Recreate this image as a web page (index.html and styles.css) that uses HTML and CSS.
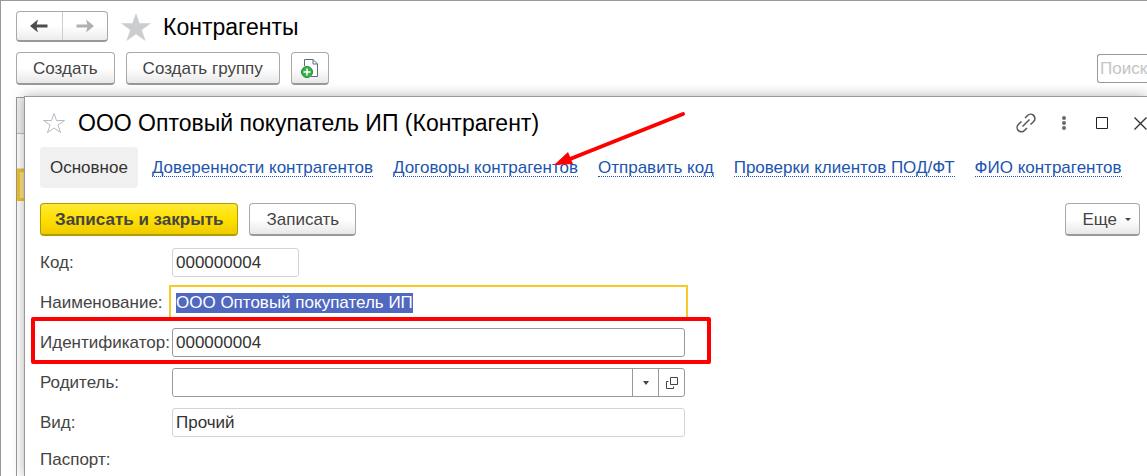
FILE: index.html
```html
<!DOCTYPE html>
<html lang="ru">
<head>
    <meta charset="UTF-8">
    <meta name="viewport" content="width=device-width, initial-scale=1.0">
    <title>Контрагенты</title>
    <link rel="stylesheet" href="styles.css">
</head>
<body>

<header class="page-head">
    <div class="history">
        <button type="button" aria-label="Назад">
            <svg width="18" height="14" viewBox="0 0 18 14"><path d="M0 7L8 0.5L6.6 5.5H17.500V8.500H6.600L8 13.500Z" fill="#4d4d4d"/></svg>
        </button>
        <button type="button" aria-label="Вперед">
            <svg width="18" height="14" viewBox="0 0 18 14"><path d="M18 7L10 0.5L11.400 5.500H0.500V8.500H11.400L10 13.500Z" fill="#b0b0b0"/></svg>
        </button>
    </div>
    <svg class="star" width="30" height="28" viewBox="0 0 30 28"><path d="M15 0L18.600 10.300H30L20.900 17L24.500 28L15 21.300L5.500 28L9.100 17L0 10.300H11.400Z" fill="#cbcdcf"/></svg>
    <h1>Контрагенты</h1>
</header>

<div class="toolbar list-toolbar">
    <button type="button" class="btn">Создать</button>
    <button type="button" class="btn">Создать группу</button>
    <button type="button" class="btn btn-icon" aria-label="Создать из файла">
        <svg width="18" height="20" viewBox="0 0 18 20">
            <path d="M3.500 8V1.500H12L16.500 6V18.500H10" fill="#fff" stroke="#5d6b7a"/>
            <path d="M12 1.500V6H16.500" fill="none" stroke="#5d6b7a"/>
            <circle cx="6" cy="14" r="5.500" fill="#35b34a" stroke="#238a36"/>
            <path d="M6 10.500V17.500M2.500 14H9.500" stroke="#fff" stroke-width="1.500"/>
        </svg>
    </button>
    <input type="text" class="search" placeholder="Поиск" aria-label="Поиск">
</div>

<main class="workspace">
    <!-- Край списка под окном -->
    <div class="list-edge">
        <div class="list-head"></div>
        <div class="list-row"></div>
        <div class="list-row selected"></div>
    </div>

    <section class="window">
        <header class="window-head">
            <svg class="star" width="22" height="20" viewBox="0 0 22 20"><path d="M11 0.500L13.500 7.500H21.500L15 12L17.500 19.500L11 15L4.500 19.500L7 12L0.500 7.500H8.500Z" fill="#fff" stroke="#b4bac0"/></svg>
            <h2>ООО Оптовый покупатель ИП (Контрагент)</h2>
            <div class="window-controls">
                <button type="button" aria-label="Ссылка">
                    <svg width="20" height="20" viewBox="0 0 20 20" fill="none" stroke="#555" stroke-width="1.500">
                        <path d="M9 5L11.500 2.500A4.300 4.300 0 0 1 17.700 8.500L14.500 11.500"/>
                        <path d="M11 15L8.500 17.500A4.300 4.300 0 0 1 2.300 11.500L5.500 8.500"/>
                        <path d="M6.500 13.500L13.500 6.500"/>
                    </svg>
                </button>
                <button type="button" aria-label="Меню">
                    <svg width="4" height="14" viewBox="0 0 4 14" fill="#6b6b6b"><circle cx="2" cy="2" r="2"/><circle cx="2" cy="7" r="2"/><circle cx="2" cy="12" r="2"/></svg>
                </button>
                <button type="button" aria-label="Развернуть">
                    <svg width="12" height="12" viewBox="0 0 12 12"><path d="M0.500 0.500H11.500V11.500H0.500Z" fill="none" stroke="#222"/></svg>
                </button>
                <button type="button" aria-label="Закрыть">
                    <svg width="13" height="13" viewBox="0 0 13 13"><path d="M0.500 0.500L12.500 12.500M12.500 0.500L0.500 12.500" stroke="#333" stroke-width="1.400"/></svg>
                </button>
            </div>
        </header>

        <nav class="tabs">
            <span class="tab-active">Основное</span>
            <a href="#">Доверенности контрагентов</a>
            <a href="#">Договоры контрагентов</a>
            <a href="#">Отправить код</a>
            <a href="#">Проверки клиентов ПОД/ФТ</a>
            <a href="#">ФИО контрагентов</a>
            <svg class="arrow" width="132" height="56" viewBox="0 0 132 56"><path d="M129 3L16 48" stroke="#f00" stroke-width="4" stroke-linecap="round"/><path d="M0 54L14 41L19 53Z" fill="#f00"/></svg>
        </nav>

        <div class="toolbar">
            <button type="button" class="btn btn-main">Записать и закрыть</button>
            <button type="button" class="btn">Записать</button>
            <button type="button" class="btn btn-more">Еще <i class="caret"></i></button>
        </div>

        <form class="fields">
            <div class="field">
                <label for="code">Код:</label>
                <input type="text" id="code" class="readonly short" value="000000004" readonly>
            </div>
            <div class="field">
                <label for="name">Наименование:</label>
                <input type="text" id="name" value="ООО Оптовый покупатель ИП">
            </div>
            <div class="field marked">
                <label for="ident">Идентификатор:</label>
                <input type="text" id="ident" value="000000004">
            </div>
            <div class="field">
                <label for="parent">Родитель:</label>
                <div class="combo">
                    <input type="text" id="parent">
                    <button type="button" aria-label="Выбрать"><i class="caret"></i></button>
                    <button type="button" aria-label="Открыть">
                        <svg width="12" height="12" viewBox="0 0 12 12" fill="none" stroke="#444"><path d="M4.500 0.500H11.500V7.500H4.500Z"/><path d="M2.500 4.500H0.500V11.500H7.500V9.500"/></svg>
                    </button>
                </div>
            </div>
            <div class="field">
                <label for="kind">Вид:</label>
                <input type="text" id="kind" class="readonly" value="Прочий" readonly>
            </div>
            <div class="field">
                <span>Паспорт:</span>
            </div>
        </form>
    </section>
</main>

<script>
    // При открытии карточки наименование выделено целиком
    const nameInput = document.getElementById('name');
    nameInput.focus();
    nameInput.select();
</script>

</body>
</html>
```
FILE: styles.css
```css
* {
    margin: 0;
    padding: 0;
    box-sizing: border-box;
}

body {
    display: flex;
    flex-direction: column;
    min-height: 100vh;
    border: 1px solid #999;
    border-right: 0;
    border-bottom: 0;
    background: #fff;
    color: #444;
    font-family: "Liberation Sans", Arial, sans-serif;
    font-size: 17px;
    line-height: 19px;
    overflow: hidden;
}

button,
input {
    font: inherit;
    color: inherit;
}

svg {
    display: block;
    flex: none;
}

h1,
h2 {
    font-size: 23px;
    font-weight: normal;
    line-height: 30px;
    color: #000;
    white-space: nowrap;
}

/* Заголовок списка */
.page-head {
    display: flex;
    align-items: center;
    padding: 10px 15px 0;
}

.history {
    display: flex;
    width: 92px;
    height: 31px;
    border: 1px solid #aaa;
    border-bottom: 2px solid #999;
    border-radius: 4px;
    background: linear-gradient(#fff 50%, #ececec);
}

.history button {
    flex: 1;
    display: flex;
    align-items: center;
    justify-content: center;
    border: 0;
    background: none;
}

.history button + button {
    border-left: 1px solid #ccc;
}

.page-head .star {
    margin: 0 12px 0 13px;
}

/* Кнопки */
.toolbar {
    display: flex;
    align-items: center;
    gap: 11px;
}

.list-toolbar {
    padding: 10px 0 11px 15px;
}

.btn {
    display: flex;
    align-items: center;
    justify-content: center;
    height: 33px;
    padding: 0 16px;
    border: 1px solid #aaa;
    border-bottom: 2px solid #999;
    border-radius: 4px;
    background: linear-gradient(#fff 50%, #e8e8e8);
    white-space: nowrap;
}

.btn-icon {
    padding: 0 9px;
}

.btn-main {
    padding: 0 14px;
    border-color: #b09c00;
    background: linear-gradient(#ffe935, #ffe000 50%, #eecb00);
    font-weight: bold;
}

.btn-more {
    gap: 8px;
    margin-left: auto;
    padding: 0 8px 0 16px;
}

.caret {
    border: 3px solid transparent;
    border-top: 3px solid #444;
    border-bottom: 0;
}

.search {
    width: 50px;
    height: 29px;
    margin-left: auto;
    padding-left: 2px;
    border: 1px solid #999;
    border-right: 0;
    border-radius: 3px 0 0 3px;
}

.search::placeholder {
    color: #c4c4c4;
}

/* Список под окном */
.workspace {
    display: flex;
    flex: 1;
    padding-left: 15px;
}

.list-edge {
    width: 8px;
    margin-top: 1px;
    border: 1px solid #999;
    border-width: 1px 0 0 1px;
}

.list-head {
    height: 36px;
    border-bottom: 1px solid #bbb;
    background: #f0f0f0;
}

.list-row {
    height: 35px;
    border-bottom: 1px solid #ddd;
}

.list-row.selected {
    height: 32px;
    border: 3px solid #f2c320;
    border-right: 0;
    background: #fbe08a;
}

/* Карточка контрагента */
.window {
    flex: 1;
    min-width: 0;
    padding-left: 15px;
    border: 1px solid #999;
    border-width: 1px 0 0 1px;
    background: #fff;
    box-shadow: 0 0 12px rgba(0, 0, 0, 0.3);
}

.window-head {
    display: flex;
    align-items: center;
    padding: 11px 0 9px 3px;
}

.window-head .star {
    margin-right: 13px;
}

.window-controls {
    display: flex;
    gap: 24px;
    margin-left: auto;
}

.window-controls button {
    display: flex;
    align-items: center;
    justify-content: center;
    width: 14px;
    height: 24px;
    border: 0;
    background: none;
}

.tabs {
    position: relative;
    display: flex;
    align-items: center;
    gap: 20px;
    white-space: nowrap;
}

.tab-active {
    margin-right: -6px;
    padding: 11px 10px;
    border-radius: 4px;
    background: #f0f0f0;
    color: #333;
}

.tabs a {
    padding-top: 1px;
    border-bottom: 1px dotted #1c55ae;
    color: #1c55ae;
    line-height: 17px;
    text-decoration: none;
}

.arrow {
    position: absolute;
    top: -36px;
    left: 514px;
}

.window .toolbar {
    padding: 15px 7px 12px 0;
}

/* Поля */
.fields {
    display: flex;
    flex-direction: column;
    gap: 11px;
    width: 645px;
}

.field {
    display: grid;
    grid-template-columns: 132px 1fr;
    align-items: center;
    line-height: 23px;
}

.field input {
    width: 100%;
    height: 29px;
    padding: 0 3px;
    border: 1px solid #999;
    border-radius: 3px;
    background: #fff;
    color: #333;
    line-height: 19px;
}

.field .readonly {
    border-color: #d4d4d4;
}

.field .short {
    width: 127px;
}

.field input:focus {
    border-color: transparent;
    outline: 2px solid #f8ca25;
    outline-offset: 1px;
    border-radius: 0;
}

.field input::selection {
    background: #5068c0;
    color: #fff;
}

.combo {
    display: flex;
    height: 29px;
    border: 1px solid #999;
    border-radius: 3px;
}

.combo input {
    flex: 1;
    height: 27px;
    border: 0;
}

.combo button {
    display: flex;
    align-items: center;
    justify-content: center;
    width: 26px;
    border: 0;
    border-left: 1px solid #999;
    background: none;
}

.combo .caret {
    border-top-width: 4px;
}

/* Красная рамка вокруг строки */
.marked {
    position: relative;
}

.marked::after {
    content: "";
    position: absolute;
    inset: -11px -26px -7px -9px;
    border: 4px solid #f00;
    border-radius: 2px;
    pointer-events: none;
}
```
